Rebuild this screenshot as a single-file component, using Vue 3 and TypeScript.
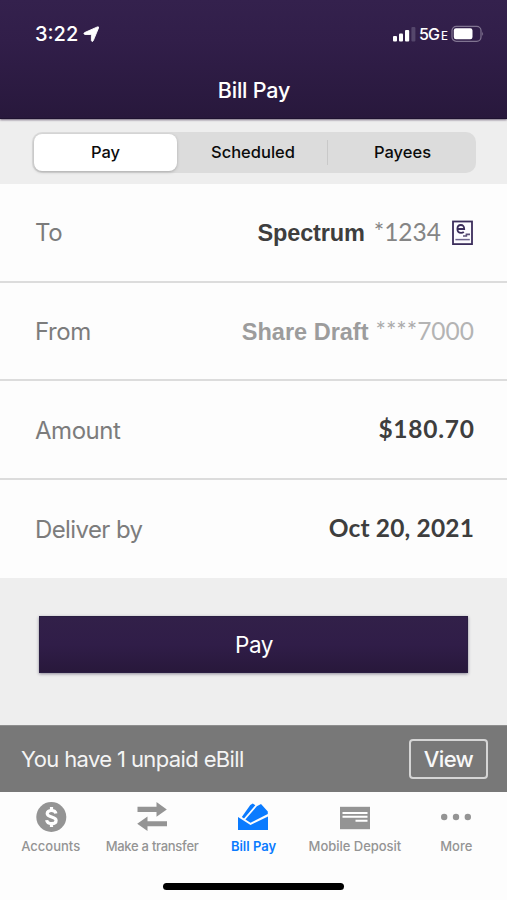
<script setup lang="ts">
import { ref } from 'vue'

type Segment = 'Pay' | 'Scheduled' | 'Payees'

interface Tab {
  id: string
  label: string
}

const segments: Segment[] = ['Pay', 'Scheduled', 'Payees']
const activeSegment = ref<Segment>('Pay')

const tabs: Tab[] = [
  { id: 'accounts', label: 'Accounts' },
  { id: 'transfer', label: 'Make a transfer' },
  { id: 'billpay', label: 'Bill Pay' },
  { id: 'deposit', label: 'Mobile Deposit' },
  { id: 'more', label: 'More' },
]
const activeTab = ref('billpay')
</script>

<template>
  <main class="screen">
    <header class="header">
      <div class="status">
        <div class="status-left">
          <span class="clock">3:22</span>
          <svg class="location" width="17" height="17" viewBox="0 0 17 17">
            <path d="M14.4.9Q16 .4 15.5 2L10.2 14.8Q9 16.4 8.4 14.6V9.2Q8.3 8.6 7.7 8.5H2Q-.1 7.8 1.6 6.6Z" fill="#fff" stroke="#fff" stroke-width=".9" />
          </svg>
        </div>
        <div class="status-right">
          <svg width="23" height="16" viewBox="0 0 23 16">
            <rect x="0" y="10" width="4" height="5.5" rx="1" fill="#fff" />
            <rect x="6" y="7.4" width="4" height="8.1" rx="1" fill="#fff" />
            <rect x="12" y="4" width="4.2" height="11.5" rx="1" fill="#fff" />
            <rect x="18.4" y="1" width="4" height="14.5" rx="1" fill="#54466b" />
          </svg>
          <span class="network">5G<small>E</small></span>
          <svg class="battery" width="33" height="18" viewBox="0 0 33 18">
            <rect x="1" y="1.3" width="29" height="15" rx="4.3" fill="none" stroke="#807491" stroke-width="1.2" />
            <rect x="2.8" y="3.2" width="18.7" height="11" rx="2.2" fill="#fff" />
            <path d="M31.2 6.5q1.8 2.2 0 4.4z" fill="#807491" />
          </svg>
        </div>
      </div>
      <h1>Bill Pay</h1>
    </header>

    <nav class="segment-bar">
      <div class="segments">
        <button
          v-for="name in segments"
          :key="name"
          class="segment"
          :class="{ active: name === activeSegment, divided: name === 'Payees' }"
          @click="activeSegment = name"
        >{{ name }}</button>
      </div>
    </nav>

    <section class="form">
      <div class="row">
        <span class="label">To</span>
        <span class="value payee">
          <b class="name">Spectrum</b><span class="number">*1234</span>
          <svg class="ebill" width="22" height="26" viewBox="0 0 22 26">
            <rect x="1" y="1.5" width="19" height="22.6" fill="#fdfcff" stroke="#3b2d5b" stroke-width="1.8" />
            <path d="M5.4 9h6.8c0-2.6-1.3-4-3.3-4-2.1 0-3.5 1.5-3.5 3.9s1.4 3.9 3.7 3.9c1.1 0 2-.3 2.7-1" fill="none" stroke="#3b2d5b" stroke-width="1.8" />
            <path d="M11 16h3.4v-1.6h3.6" fill="none" stroke="#5c5078" stroke-width="1.6" />
            <path d="M3.4 19.6h14.4" stroke="#6e638c" stroke-width="1.5" />
          </svg>
        </span>
      </div>
      <div class="row">
        <span class="label">From</span>
        <span class="value muted"><b class="name share">Share Draft</b><span class="stars">****</span><span class="account">7000</span></span>
      </div>
      <div class="row">
        <span class="label">Amount</span>
        <span class="value"><b class="amount">$180.70</b></span>
      </div>
      <div class="row">
        <span class="label deliver">Deliver by</span>
        <span class="value"><b class="date">Oct 20, 2021</b></span>
      </div>
    </section>

    <section class="action">
      <button class="pay">Pay</button>
    </section>

    <aside class="notice">
      <span class="notice-text">You have 1 unpaid eBill</span>
      <button class="view">View</button>
    </aside>

    <footer class="tabbar">
      <div class="tabs">
        <button
          v-for="tab in tabs"
          :key="tab.id"
          class="tab"
          :class="[tab.id, { active: tab.id === activeTab }]"
          @click="activeTab = tab.id"
        >
          <svg width="34" height="34" viewBox="0 0 34 34" fill="currentColor">
            <template v-if="tab.id === 'accounts'">
              <circle cx="17.3" cy="17" r="15" />
              <path d="M21.9 13.6c-.3-2-1.9-3.1-4.4-3.1-2.6 0-4.3 1.2-4.3 3.1 0 4.4 8.9 2.4 8.9 6.8 0 2-1.8 3.2-4.5 3.2-2.8 0-4.6-1.3-4.9-3.5M17.5 7v3.8M17.5 23v4" fill="none" stroke="#fff" stroke-width="3.2" />
            </template>
            <template v-else-if="tab.id === 'transfer'">
              <path d="M2.5 6.8h19V2l10.3 7.4-10.3 7.4v-4.9h-19zM32 26.2H12.5V31L2.2 23.7l10.3-7.3v4.8H32z" />
            </template>
            <template v-else-if="tab.id === 'billpay'">
              <path d="M2 17.1 14.5 25 32 16.5V30H2z" />
              <path d="M5.8 17 14.3 4.9 16.8 3.6 19.3 5.2 8 18.5zM9.4 19.6 20.8 6.2 25 4 31.8 11.6V14L14.5 22.7z" />
            </template>
            <template v-else-if="tab.id === 'deposit'">
              <path d="M2 6.8h30v22.4H2z" />
              <path d="M4.5 12h25v2h-25zM4.5 15.8h25v2h-25zM17.5 19.8h12v2h-12z" fill="#fff" />
            </template>
            <template v-else>
              <circle cx="5.2" cy="17" r="3.2" />
              <circle cx="17" cy="17" r="3.2" />
              <circle cx="28.8" cy="17" r="3.2" />
            </template>
          </svg>
          <span class="tab-label">{{ tab.label }}</span>
        </button>
      </div>
      <div class="home"></div>
    </footer>
  </main>
</template>

<style>
body {
  background: #fdfdfd;
}
</style>

<style scoped>
* {
  box-sizing: border-box;
}
.screen {
  width: 507px;
  height: 900px;
  display: flex;
  flex-direction: column;
  overflow: hidden;
  background: #eee;
  font-family: Inter, "Liberation Sans", sans-serif;
}
button {
  font: inherit;
  border: 0;
  padding: 0;
  background: none;
  cursor: pointer;
}
.header {
  height: 119px;
  flex: none;
  background: linear-gradient(#34214d, #311e49 35%, #28183c);
  border-bottom: 1px solid #1e1230;
  box-shadow: 0 1px 2px #75677d;
  color: #fff;
  z-index: 1;
}
.status {
  height: 66px;
  padding: 2px 23px 0 35px;
  display: flex;
  align-items: center;
  justify-content: space-between;
}
.status-left,
.status-right {
  display: flex;
  align-items: center;
}
.clock {
  font-size: 20px;
  font-weight: 500;
  line-height: 24px;
}
.location {
  margin-left: 5px;
}
.network {
  margin-left: 3px;
  width: 32px;
  font-size: 16px;
  font-weight: 500;
  letter-spacing: -0.9px;
  white-space: nowrap;
}
.network small {
  font-size: 11.5px;
  margin-left: 2px;
}
h1 {
  margin: 10px 0 0;
  padding-left: 1px;
  font-size: 21.5px;
  font-weight: 500;
  line-height: 28px;
  text-align: center;
  letter-spacing: -0.2px;
}
.segment-bar {
  height: 65px;
  flex: none;
  padding: 13px 32px 0;
}
.segments {
  width: 444px;
  height: 41px;
  display: grid;
  grid-template-columns: 145px 150px 149px;
  background: #dcdcdc;
  border-radius: 10px;
}
.segment {
  position: relative;
  color: #0b0b0b;
  font-size: 16.5px;
  font-weight: 500;
  padding: 0 0 1px 2px;
}
.segment.active {
  margin: 2px 0 2px 2px;
  padding-left: 0;
  background: #fff;
  border-radius: 8px;
  box-shadow: 0 1px 3px #aaa;
}
.segment.divided::before {
  content: "";
  position: absolute;
  left: 0;
  top: 8px;
  width: 1px;
  height: 25px;
  background: #c9c9c9;
}
.form {
  height: 394px;
  flex: none;
  background: #fdfdfd;
  display: grid;
  grid-template-rows: repeat(3, 98.7px) 1fr;
}
.row {
  display: flex;
  align-items: center;
  justify-content: space-between;
  padding: 2px 33px 0 35px;
  border-bottom: 2px solid #dcdcdc;
}
.row:last-child {
  border-bottom: 0;
  padding-top: 1px;
}
.label {
  color: #7c7c7c;
  font-size: 24px;
  line-height: 32px;
  letter-spacing: -0.45px;
}
.deliver {
  letter-spacing: -0.6px;
}
.value {
  display: flex;
  align-items: center;
  color: #3e3e3e;
  font-family: Lato, "Liberation Sans", sans-serif;
  font-size: 24.5px;
  line-height: 32px;
  white-space: nowrap;
}
.value b {
  font-weight: 700;
}
.amount,
.date,
.number,
.stars,
.account {
  padding-bottom: 3px;
}
.amount {
  letter-spacing: 0.75px;
  margin-right: -0.75px;
}
.date {
  letter-spacing: 0.15px;
}
.value .name {
  font-family: "Liberation Sans", sans-serif;
  font-size: 23.5px;
  letter-spacing: -0.15px;
}
.value .share {
  letter-spacing: 0;
}
.number {
  margin-left: 9px;
  color: #858585;
  font-weight: 400;
}
.ebill {
  margin-left: 11px;
}
.muted {
  color: #9c9c9c;
}
.stars {
  margin-left: 7px;
  color: #ababab;
}
.account {
  color: #b4b4b4;
  font-weight: 400;
}
.action {
  height: 147px;
  flex: none;
  padding: 38px 39px 0;
}
.pay {
  display: block;
  width: 429px;
  height: 57px;
  padding-left: 1px;
  color: #fff;
  font-size: 22.5px;
  letter-spacing: -0.5px;
  background: linear-gradient(#322049, #301d48 50%, #28183b);
  border: 1px solid #2a1e42;
  box-shadow: 0 1px 3px #8c8795;
}
.notice {
  height: 67px;
  flex: none;
  background: #787878;
  border-top: 1px solid #8e8e8e;
  padding: 0 19px 0 21px;
  display: flex;
  align-items: center;
  justify-content: space-between;
  color: #f4f4f4;
}
.notice-text {
  font-size: 22px;
  letter-spacing: -0.62px;
}
.view {
  width: 79px;
  height: 40px;
  border: 2px solid #d5d5d5;
  border-radius: 4px;
  color: #f8f8f8;
  font-size: 22px;
  font-weight: 500;
  letter-spacing: -0.6px;
}
.tabbar {
  height: 108px;
  flex: none;
  background: #fdfdfd;
  padding-top: 8px;
  display: flex;
  flex-direction: column;
  align-items: center;
}
.tabs {
  width: 507px;
  height: 83px;
  display: grid;
  grid-template-columns: repeat(5, 1fr);
}
.tab {
  display: flex;
  flex-direction: column;
  align-items: center;
  justify-content: flex-start;
  color: #949494;
}
.tab.active {
  color: #0a7bff;
}
.tab-label {
  margin-top: 4px;
  font-size: 13px;
  font-weight: 500;
  line-height: 16px;
  white-space: nowrap;
}
.transfer .tab-label {
  letter-spacing: -0.28px;
}
.deposit .tab-label {
  letter-spacing: -0.03px;
}
.active .tab-label {
  font-weight: 600;
}
.home {
  width: 181px;
  height: 7px;
  border-radius: 4px;
  background: #000;
}
</style>
